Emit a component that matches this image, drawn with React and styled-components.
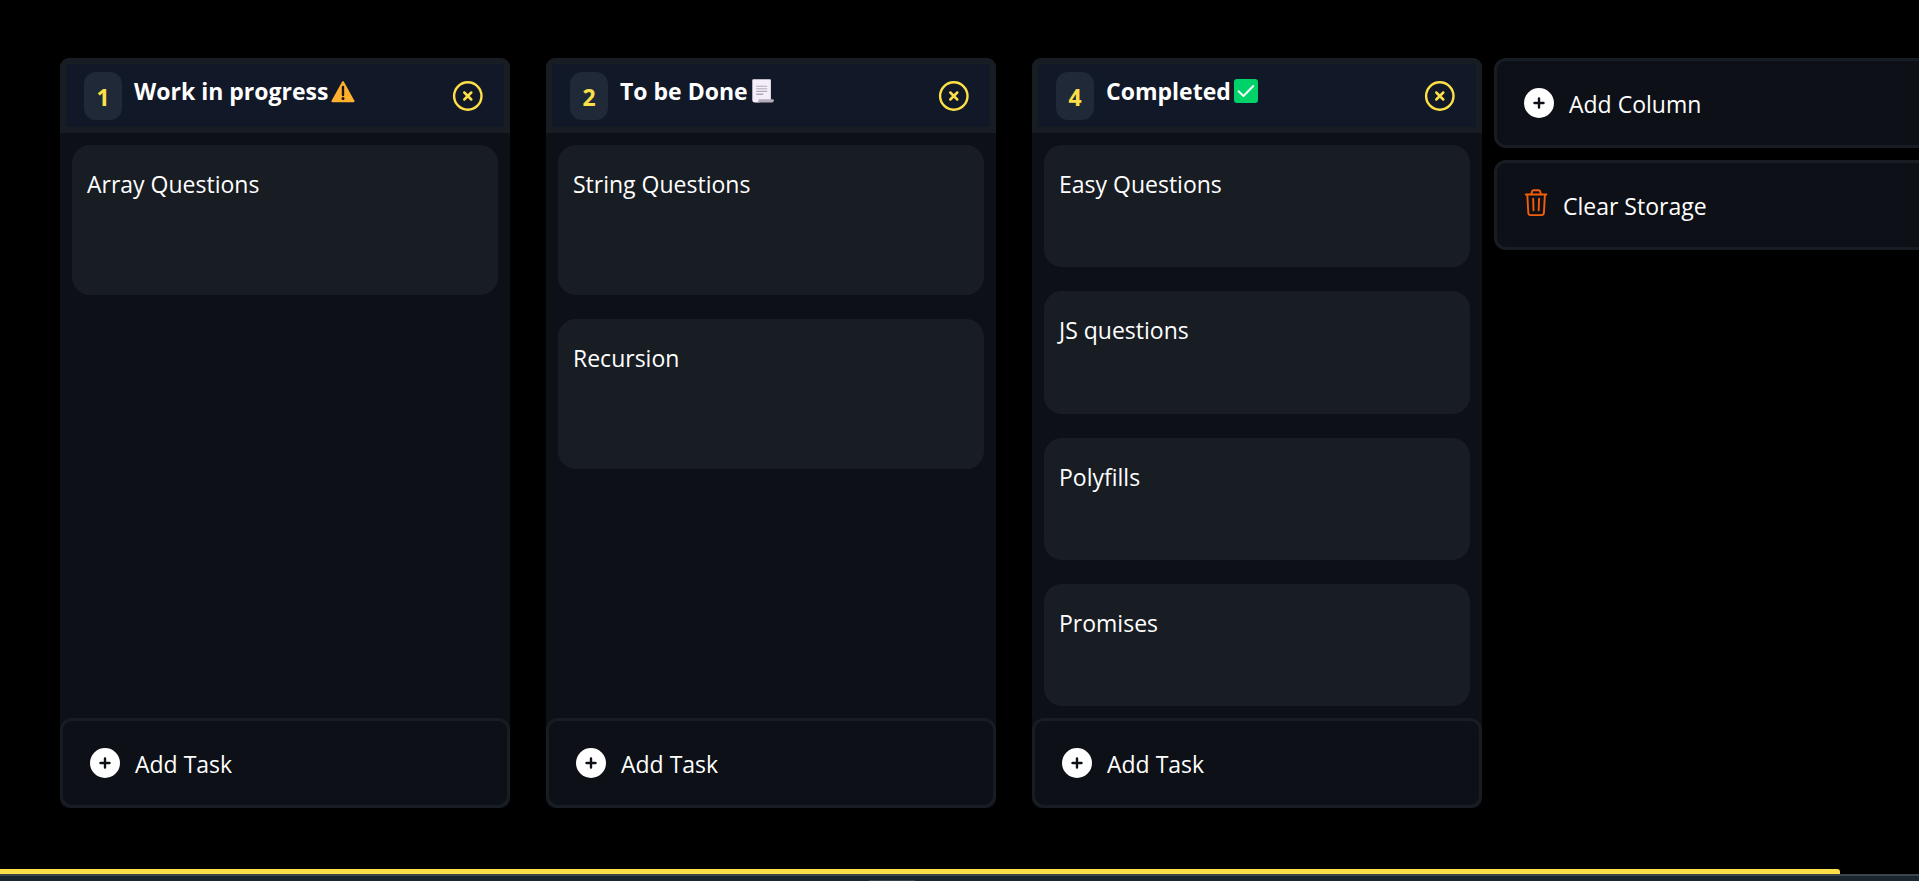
import React from "react";
import styled, { createGlobalStyle } from "styled-components";

const colors = {
  page: "#000000",
  panel: "#0d1017",
  surface: "#181c23",
  header: "#111827",
  badge: "#1f2937",
  accent: "#fde047",
  danger: "#f45d0a",
};

const GlobalStyle = createGlobalStyle`
  *, *::before, *::after { box-sizing: border-box; }
  body {
    margin: 0;
    background: ${colors.page};
    color: #fff;
    font: 23px/36px "Open Sans", "Noto Sans", sans-serif;
    overflow: hidden;
  }
  button { font: inherit; color: inherit; cursor: pointer; }
  h2, ul { margin: 0; padding: 0; }
  svg { display: block; flex: none; }
`;

const Page = styled.div`
  display: flex;
  flex-direction: column;
  height: 100vh;
  overflow: hidden;
`;

const Board = styled.main`
  flex: 1;
  min-height: 0;
  display: flex;
  align-items: flex-start;
  gap: 12px;
  padding: 58px 0 0 60px;
  overflow: hidden;
`;

const Columns = styled.div`
  display: flex;
  flex: none;
  gap: 36px;
`;

const ColumnPanel = styled.section`
  flex: none;
  width: 450px;
  height: 750px;
  display: flex;
  flex-direction: column;
  background: ${colors.panel};
  border-radius: 9px;
`;

const ColumnHeader = styled.header`
  flex: none;
  display: flex;
  align-items: center;
  height: 75px;
  padding: 0 18px;
  border: 6px solid ${colors.surface};
  border-radius: 9px 9px 0 0;
  background: ${colors.header};
`;

const Count = styled.span`
  width: 38px;
  height: 48px;
  padding-top: 7px;
  border-radius: 12px;
  background: ${colors.badge};
  color: ${colors.accent};
  font-weight: 700;
  text-align: center;
`;

const Title = styled.h2`
  flex: 1;
  display: flex;
  align-items: center;
  gap: 3px;
  padding: 0 0 9px 12px;
  font-size: 23px;
  font-weight: 700;
`;

const CloseButton = styled.button`
  display: flex;
  padding: 0;
  border: 0;
  background: none;
  color: ${colors.accent};
`;

const TaskList = styled.ul`
  flex: 1;
  min-height: 0;
  display: flex;
  flex-direction: column;
  gap: 24px;
  padding: 12px;
  list-style: none;
`;

const Task = styled.li`
  flex: 0 1 150px;
  padding: 21px 15px;
  border-radius: 18px;
  background: ${colors.surface};
`;

const ActionButton = styled.button`
  flex: none;
  display: flex;
  align-items: center;
  gap: 12px;
  width: 100%;
  height: 90px;
  padding: 0 24px;
  border: 3px solid ${colors.surface};
  border-radius: 12px;
  background: ${colors.panel};
  text-align: left;
`;

const ActionLabel = styled.span`
  padding-top: 2px;
`;

const Actions = styled.aside`
  flex: none;
  width: 525px;
  display: flex;
  flex-direction: column;
  gap: 12px;
`;

const ScrollThumb = styled.div`
  flex: none;
  width: 96%;
  max-width: 1840px;
  height: 5px;
  border-radius: 0 3px 0 0;
  background: ${colors.accent};
`;

const BottomStrip = styled.footer`
  flex: none;
  display: flex;
  flex-direction: column;
  align-items: center;
  justify-content: flex-end;
  height: 7px;
  border-top: 2px solid #3c444e;
  background: #1b2530;
`;

const StripHandle = styled.div`
  width: 46px;
  height: 1px;
  margin-right: 136px;
  background: #36424c;
`;

const CloseIcon = () => (
  <svg width="36" height="36" viewBox="0 0 36 36" fill="none" stroke="currentColor" strokeLinecap="round" aria-hidden="true">
    <circle cx="17.8" cy="18" r="13.7" strokeWidth="2.4" />
    <path d="M14.3 14.5l7 7M21.3 14.5l-7 7" strokeWidth="2.5" />
  </svg>
);

const AddIcon = () => (
  <svg width="36" height="36" viewBox="0 0 36 36" aria-hidden="true">
    <circle cx="18" cy="18" r="15" fill="#fff" />
    <path d="M18 13.5v9M13.5 18h9" stroke={colors.panel} strokeWidth="2.4" strokeLinecap="round" />
  </svg>
);

const TrashIcon = () => (
  <svg width="30" height="32" viewBox="1 1 30 32" fill="none" stroke={colors.danger} strokeWidth="1.9" strokeLinecap="round" strokeLinejoin="round" aria-hidden="true">
    <path d="M5.8 6.5h20.6" />
    <path d="M11.4 6.2l.5-2.4a1.9 1.9 0 0 1 1.9-1.5h4.6a1.9 1.9 0 0 1 1.9 1.5l.5 2.4" />
    <path d="M7.3 6.7l1 18a2.5 2.5 0 0 0 2.5 2.4h10.6a2.5 2.5 0 0 0 2.5-2.4l1-18" />
    <path d="M13.2 10.8l.3 11.5M19 10.8l-.3 11.5" />
  </svg>
);

const WarningIcon = () => (
  <svg width="24" height="24" viewBox="0 0 24 24" role="img" aria-label="Warning">
    <path d="M11.1 2.8q.9-1.5 1.8 0L23.3 21.6q.8 1.6-.9 1.6H1.6q-1.7 0-.9-1.6z" fill="#ffb02e" />
    <path d="M12 8v8" stroke="#1c1414" strokeWidth="2.4" strokeLinecap="round" />
    <circle cx="12" cy="19.6" r="1.5" fill="#1c1414" />
  </svg>
);

const ScrollIcon = () => (
  <svg width="24" height="24" viewBox="0 0 24 24" role="img" aria-label="Scroll">
    <path d="M1.3 1.2q0-1 1-1h16.6q1 0 1 1V21L7.5 23.4H3.9q-2.6 0-2.6-2.6z" fill="#f3eef8" />
    <path d="M7.6 20.2h13.9q1.6 0 1.4 1.2-.3 2.2-2.4 2.2H4.5q3.3-.3 3.1-3.4z" fill="#b4acbc" />
    <path d="M5.2 7.2h11M5.2 9.8h11M5.2 12.4h11" stroke="#b4acbc" strokeWidth="1.1" />
    <path d="M5.2 15.2h7" stroke="#998ea4" strokeWidth="1.1" />
  </svg>
);

const CheckIcon = () => (
  <svg width="24" height="24" viewBox="0 0 24 24" role="img" aria-label="Done">
    <rect width="24" height="24" rx="3" fill="#00d26a" />
    <path d="M4.6 12.2l4.9 4.8L19.3 7" fill="none" stroke="#f4fff9" strokeWidth="2" strokeLinecap="round" strokeLinejoin="round" />
  </svg>
);

const board = [
  { id: 1, title: "Work in progress", Emoji: WarningIcon, tasks: ["Array Questions"] },
  { id: 2, title: "To be Done", Emoji: ScrollIcon, tasks: ["String Questions", "Recursion"] },
  { id: 4, title: "Completed", Emoji: CheckIcon, tasks: ["Easy Questions", "JS questions", "Polyfills", "Promises"] },
];

function Column({ id, title, Emoji, tasks }) {
  return (
    <ColumnPanel>
      <ColumnHeader>
        <Count>{id}</Count>
        <Title>
          {title}
          <Emoji />
        </Title>
        <CloseButton type="button" aria-label={`Delete ${title}`}>
          <CloseIcon />
        </CloseButton>
      </ColumnHeader>
      <TaskList>
        {tasks.map((task) => (
          <Task key={task}>{task}</Task>
        ))}
      </TaskList>
      <ActionButton type="button">
        <AddIcon />
        <ActionLabel>Add Task</ActionLabel>
      </ActionButton>
    </ColumnPanel>
  );
}

export default function App() {
  return (
    <Page>
      <GlobalStyle />
      <Board>
        <Columns>
          {board.map((column) => (
            <Column key={column.id} {...column} />
          ))}
        </Columns>
        <Actions>
          <ActionButton type="button">
            <AddIcon />
            <ActionLabel>Add Column</ActionLabel>
          </ActionButton>
          <ActionButton type="button">
            <TrashIcon />
            <ActionLabel>Clear Storage</ActionLabel>
          </ActionButton>
        </Actions>
      </Board>
      <ScrollThumb />
      <BottomStrip>
        <StripHandle />
      </BottomStrip>
    </Page>
  );
}
